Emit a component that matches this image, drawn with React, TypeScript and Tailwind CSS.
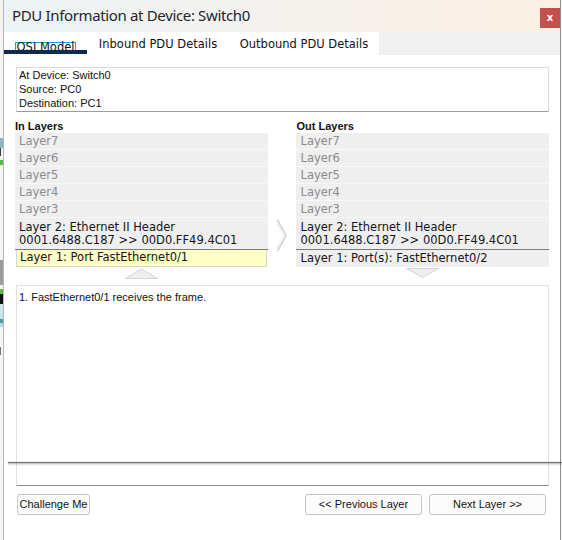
import React from 'react';

const inLayers = ['Layer7', 'Layer6', 'Layer5', 'Layer4', 'Layer3'];

function LayerColumn({ title, port, active }: { title: string; port: string; active?: boolean }) {
  return (
    <div className="flex flex-col w-[253px]">
      <div className="font-['Liberation_Sans',Arial,sans-serif] font-bold text-[11px] leading-[13px] text-[#111] mb-[0px]">
        {title}
      </div>
      <div className="flex flex-col font-['DejaVu_Sans',Verdana,sans-serif] text-[11.5px]">
        {inLayers.map((l) => (
          <div key={l} className="h-[17px] leading-[16px] pl-[4px] bg-[#efefef] border-b border-[#f7f7f7] text-[#8c8c8c]">
            {l}
          </div>
        ))}
        <div className="h-[31px] pt-[3px] pl-[4px] leading-[13px] bg-[#efefef] text-[#151515]">
          <div>Layer 2: Ethernet II Header</div>
          <div>0001.6488.C187 &gt;&gt; 00D0.FF49.4C01</div>
        </div>
        <div className="h-[1px] bg-[#7c7c7c]" />
        {active ? (
          <div className="h-[17px] leading-[15px] pl-[3px] ml-[1px] mr-[1px] bg-[#ffffc6] border-x border-b border-[#d6d6c8] text-[#151515]">
            {port}
          </div>
        ) : (
          <div className="h-[17px] leading-[16px] pl-[4px] bg-[#efefef] text-[#151515]">{port}</div>
        )}
      </div>
    </div>
  );
}

function Btn({ label, w }: { label: string; w: string }) {
  return (
    <button
      className={`${w} h-[21px] rounded-[3px] border border-[#c4c4c4] bg-[#fcfcfc] font-['Liberation_Sans',Arial,sans-serif] text-[11px] text-[#111] leading-[19px]`}
    >
      {label}
    </button>
  );
}

export default function App() {
  return (
    <div className="w-[562px] h-[540px] bg-white flex overflow-hidden relative">
      {/* background app peeking at the left */}
      <div className="w-[3px] flex flex-col bg-[#f4f4f4]">
        <div className="h-[138px]" />
        <div className="h-[10px] bg-[#8fb3c2]" />
        <div className="h-[8px] bg-[#3a3a3a] w-[1px]" />
        <div className="h-[4px]" />
        <div className="h-[5px] bg-[#58b848]" />
        <div className="h-[95px]" />
        <div className="h-[25px] bg-[#9a9a9a]" />
        <div className="h-[4px]" />
        <div className="h-[5px] bg-[#5ab94a]" />
        <div className="h-[10px] bg-[#111]" />
        <div className="h-[15px] bg-[#cfe3ea]" />
        <div className="h-[4px] bg-[#4e97ad]" />
        <div className="h-[4px] bg-[#b9d6df]" />
        <div className="h-[20px]" />
        <div className="h-[8px] bg-[#777] w-[1px]" />
      </div>

      <div className="w-[558px] flex flex-col border-l border-[#b8b8b8] border-r border-r-[#8a8a8a]">
        {/* title bar */}
        <div className="h-[32px] flex items-center justify-between pl-[8px] pr-[0px] bg-gradient-to-r from-[#edf4f7] to-[#fcf0e4]">
          <span className="font-['Noto_Sans',sans-serif] text-[15px] tracking-[-0.35px] text-[#262626] leading-[20px] -mt-[2px]">
            PDU Information at Device: Switch0
          </span>
          <button className="w-[20px] h-[20px] mt-[3px] bg-[#c4504e] text-white font-['DejaVu_Sans',sans-serif] font-bold text-[10px] leading-[18px] text-center">
            x
          </button>
        </div>

        {/* tabs */}
        <div className="h-[23px] flex bg-[#f0f0f0] font-['DejaVu_Sans',Verdana,sans-serif] text-[11.5px] text-[#111]">
          <div className="w-[375px] flex bg-white">
            <div className="w-[83px] flex flex-col items-center">
              <div className="pt-[7px] h-[18px]">
                <span className="inline-block border border-[#1aa3e3] px-[1px] leading-[8px] h-[10px]">OSI Model</span>
              </div>
              <div className="h-[4px] w-full bg-[#0e2a4c] mt-[0px]" />
            </div>
            <div className="w-[142px] pt-[5px] leading-[14px] text-center">Inbound PDU Details</div>
            <div className="w-[150px] pt-[5px] leading-[14px] text-center">Outbound PDU Details</div>
          </div>
        </div>

        {/* body */}
        <div className="flex flex-col pl-[11px] pr-[11px] pt-[12px] bg-white flex-1">
          <div className="ml-[1px] h-[45px] border border-[#dcdcdc] border-b-[#9c9c9c] pl-[2px] pt-[0px] font-['Liberation_Sans',Arial,sans-serif] text-[11px] leading-[14px] text-[#111]">
            <div>At Device: Switch0</div>
            <div>Source: PC0</div>
            <div>Destination: PC1</div>
          </div>

          <div className="flex mt-[8px]">
            <LayerColumn title="In Layers" port="Layer 1: Port FastEthernet0/1" active />
            <div className="w-[29px] flex justify-center pt-[99px]">
              <svg width="12" height="33" viewBox="0 0 12 33">
                <polyline points="1.5,1 10,16.5 1.5,32" fill="none" stroke="#d2d2d2" strokeWidth="1.6" />
                <polyline points="1,4 7.5,16.5 1,29" fill="none" stroke="#ececec" strokeWidth="1" />
              </svg>
            </div>
            <LayerColumn title="Out Layers" port="Layer 1: Port(s): FastEthernet0/2" />
          </div>

          <div className="flex h-[18px] pt-[1px]">
            <div className="w-[253px] flex justify-center">
              <svg width="33" height="11" viewBox="0 0 33 11">
                <polygon points="0.5,10.5 16.5,1 32.5,10.5" fill="#eeeeee" stroke="#d4d4d4" strokeWidth="1" />
              </svg>
            </div>
            <div className="w-[29px]" />
            <div className="w-[253px] flex justify-center">
              <svg width="33" height="11" viewBox="0 0 33 11">
                <polygon points="0.5,0.5 32.5,0.5 16.5,9.5" fill="#eeeeee" stroke="#d4d4d4" strokeWidth="1" />
              </svg>
            </div>
          </div>

          <div className="ml-[1px] h-[201px] border border-[#e2e2e2] border-b-[#8a8a8a] pl-[2px] pt-[5px] font-['Liberation_Sans',Arial,sans-serif] text-[11px] leading-[13px] text-[#111]">
            1. FastEthernet0/1 receives the frame.
          </div>

          <div className="flex justify-between items-start mt-[8px] ml-[2px] mr-[3px]">
            <Btn label="Challenge Me" w="w-[73px]" />
            <div className="flex gap-[7px]">
              <Btn label="<< Previous Layer" w="w-[117px]" />
              <Btn label="Next Layer >>" w="w-[117px]" />
            </div>
          </div>
        </div>
      </div>

      {/* shadow edge of a window lying over the dialog */}
      <div className="absolute left-[8px] right-0 top-[462px] h-[1px] bg-[#6c6c6c] shadow-[0_1px_2px_rgba(0,0,0,0.45)]" />
    </div>
  );
}
